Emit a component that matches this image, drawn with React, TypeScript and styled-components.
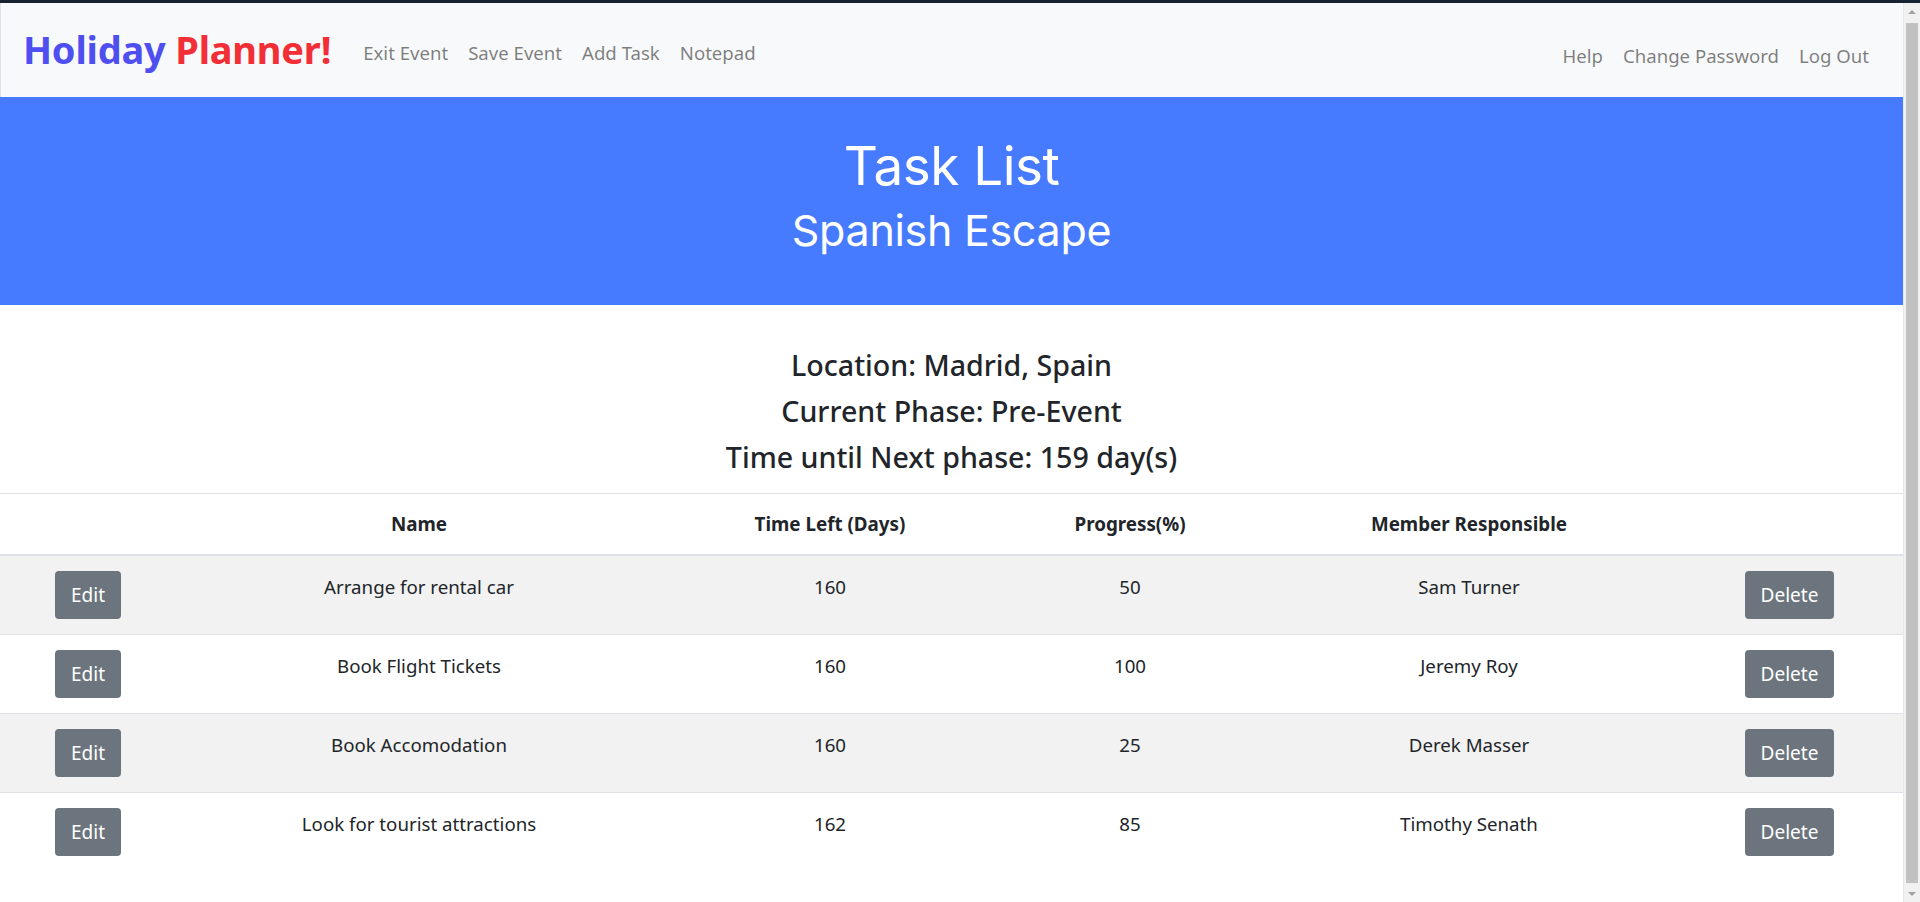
import React from "react";
import styled, { createGlobalStyle } from "styled-components";

const GlobalStyle = createGlobalStyle`
  html, body { margin: 0; padding: 0; height: 100%; overflow: hidden; }
  body {
    font-family: "Noto Sans", "Open Sans", sans-serif;
    color: #212529;
    background: #ffffff;
  }
  * { box-sizing: border-box; }
`;

const TopStrip = styled.div`
  height: 3px;
  background: #172233;
`;

const Frame = styled.div`
  display: flex;
  height: calc(100vh - 3px);
`;

const Page = styled.div`
  flex: 1;
  min-width: 0;
  overflow: hidden;
`;

const ScrollRail = styled.div`
  width: 17px;
  flex-shrink: 0;
  background: #f1f1f1;
  border-left: 1px solid #e8e8e8;
  display: flex;
  flex-direction: column;
  align-items: center;
`;

const ScrollArrow = styled.div<{ $down?: boolean }>`
  height: 17px;
  width: 100%;
  display: flex;
  align-items: center;
  justify-content: center;
  &::after {
    content: "";
    width: 0;
    height: 0;
    border-left: 4px solid transparent;
    border-right: 4px solid transparent;
    ${(p) =>
      p.$down
        ? "border-top: 4px solid #a3a3a3;"
        : "border-bottom: 4px solid #a3a3a3;"}
  }
`;

const ScrollThumb = styled.div`
  flex: 1;
  width: 12px;
  margin: 3px 0 2px;
  background: #c1c1c1;
`;

const NavBar = styled.nav`
  height: 94px;
  background: #f8f9fa;
  border-left: 1px solid #dee2e6;
  display: flex;
  align-items: center;
  padding: 0 34px 0 22px;
`;

const Brand = styled.a`
  font-size: 38px;
  font-weight: 700;
  letter-spacing: -0.2px;
  margin-right: 32px;
  margin-top: -2px;
  text-decoration: none;
`;

const BrandPart = styled.span<{ $color: string }>`
  color: ${(p) => p.$color};
`;

const NavGroup = styled.div<{ $right?: boolean; $shift: number }>`
  display: flex;
  gap: 20px;
  margin-left: ${(p) => (p.$right ? "auto" : "0")};
  margin-top: ${(p) => p.$shift}px;
`;

const NavLink = styled.a`
  font-size: 18.6px;
  color: rgba(0, 0, 0, 0.5);
  text-decoration: none;
`;

const Banner = styled.header`
  height: 208px;
  background: #477bff;
  color: #ffffff;
  display: flex;
  flex-direction: column;
  align-items: center;
  padding-top: 41px;
  font-family: Inter, "Noto Sans", sans-serif;
`;

const BannerTitle = styled.h1`
  margin: 0 0 10px;
  font-size: 53px;
  font-weight: 400;
  line-height: 56px;
  letter-spacing: -0.5px;
`;

const BannerSub = styled.h2`
  margin: 0;
  font-size: 43px;
  font-weight: 400;
  line-height: 52px;
  letter-spacing: -0.3px;
`;

const Info = styled.section`
  display: flex;
  flex-direction: column;
  align-items: center;
  gap: 12px;
  padding: 43px 0 19px;
`;

const InfoLine = styled.h3`
  margin: 0;
  font-size: 28.6px;
  font-weight: 500;
  line-height: 34px;
`;

const Table = styled.div`
  border-top: 1px solid #dee2e6;
`;

const cols = "176px 486px 336px 264px 414px 1fr";

const HeadRow = styled.div`
  display: grid;
  grid-template-columns: ${cols};
  height: 62px;
  align-items: center;
  border-bottom: 2px solid #dee2e6;
`;

const HeadCell = styled.div`
  text-align: center;
  font-weight: 700;
  font-size: 18.8px;
`;

const Row = styled.div<{ $striped: boolean; $last: boolean }>`
  display: grid;
  grid-template-columns: ${cols};
  height: 79px;
  align-items: start;
  padding-top: 15px;
  background: ${(p) => (p.$striped ? "#f2f2f2" : "#ffffff")};
  border-bottom: ${(p) => (p.$last ? "none" : "1px solid #dee2e6")};
`;

const Cell = styled.div`
  text-align: center;
  font-size: 18.7px;
  line-height: 26px;
  padding-top: 3px;
`;

const ButtonCell = styled.div`
  display: flex;
  justify-content: center;
`;

const ActionButton = styled.button`
  height: 48px;
  padding: 0 16px;
  border: none;
  border-radius: 4px;
  background: #6c757d;
  color: #ffffff;
  font-family: "Noto Sans", sans-serif;
  font-size: 19px;
  cursor: pointer;
`;

const Footer = styled.footer`
  text-align: center;
  font-size: 17px;
  padding: 24px 0 20px;
  color: #212529;
`;

const tasks = [
  { name: "Arrange for rental car", days: 160, progress: 50, member: "Sam Turner" },
  { name: "Book Flight Tickets", days: 160, progress: 100, member: "Jeremy Roy" },
  { name: "Book Accomodation", days: 160, progress: 25, member: "Derek Masser" },
  { name: "Look for tourist attractions", days: 162, progress: 85, member: "Timothy Senath" },
];

export default function App() {
  return (
    <>
      <GlobalStyle />
      <TopStrip />
      <Frame>
        <Page>
          <NavBar>
            <Brand href="#">
              <BrandPart $color="#4f4ff0">Holiday</BrandPart>{" "}
              <BrandPart $color="#f22f36">Planner!</BrandPart>
            </Brand>
            <NavGroup $shift={5}>
              <NavLink href="#">Exit Event</NavLink>
              <NavLink href="#">Save Event</NavLink>
              <NavLink href="#">Add Task</NavLink>
              <NavLink href="#">Notepad</NavLink>
            </NavGroup>
            <NavGroup $right $shift={11}>
              <NavLink href="#">Help</NavLink>
              <NavLink href="#">Change Password</NavLink>
              <NavLink href="#">Log Out</NavLink>
            </NavGroup>
          </NavBar>
          <Banner>
            <BannerTitle>Task List</BannerTitle>
            <BannerSub>Spanish Escape</BannerSub>
          </Banner>
          <Info>
            <InfoLine>Location: Madrid, Spain</InfoLine>
            <InfoLine>Current Phase: Pre-Event</InfoLine>
            <InfoLine>Time until Next phase: 159 day(s)</InfoLine>
          </Info>
          <Table>
            <HeadRow>
              <HeadCell />
              <HeadCell>Name</HeadCell>
              <HeadCell>Time Left (Days)</HeadCell>
              <HeadCell>Progress(%)</HeadCell>
              <HeadCell>Member Responsible</HeadCell>
              <HeadCell />
            </HeadRow>
            {tasks.map((t, i) => (
              <Row key={t.name} $striped={i % 2 === 0} $last={i === tasks.length - 1}>
                <ButtonCell>
                  <ActionButton>Edit</ActionButton>
                </ButtonCell>
                <Cell>{t.name}</Cell>
                <Cell>{t.days}</Cell>
                <Cell>{t.progress}</Cell>
                <Cell>{t.member}</Cell>
                <ButtonCell>
                  <ActionButton>Delete</ActionButton>
                </ButtonCell>
              </Row>
            ))}
          </Table>
          <Footer>Created by Jeremy Roy</Footer>
        </Page>
        <ScrollRail aria-hidden="true">
          <ScrollArrow />
          <ScrollThumb />
          <ScrollArrow $down />
        </ScrollRail>
      </Frame>
    </>
  );
}
